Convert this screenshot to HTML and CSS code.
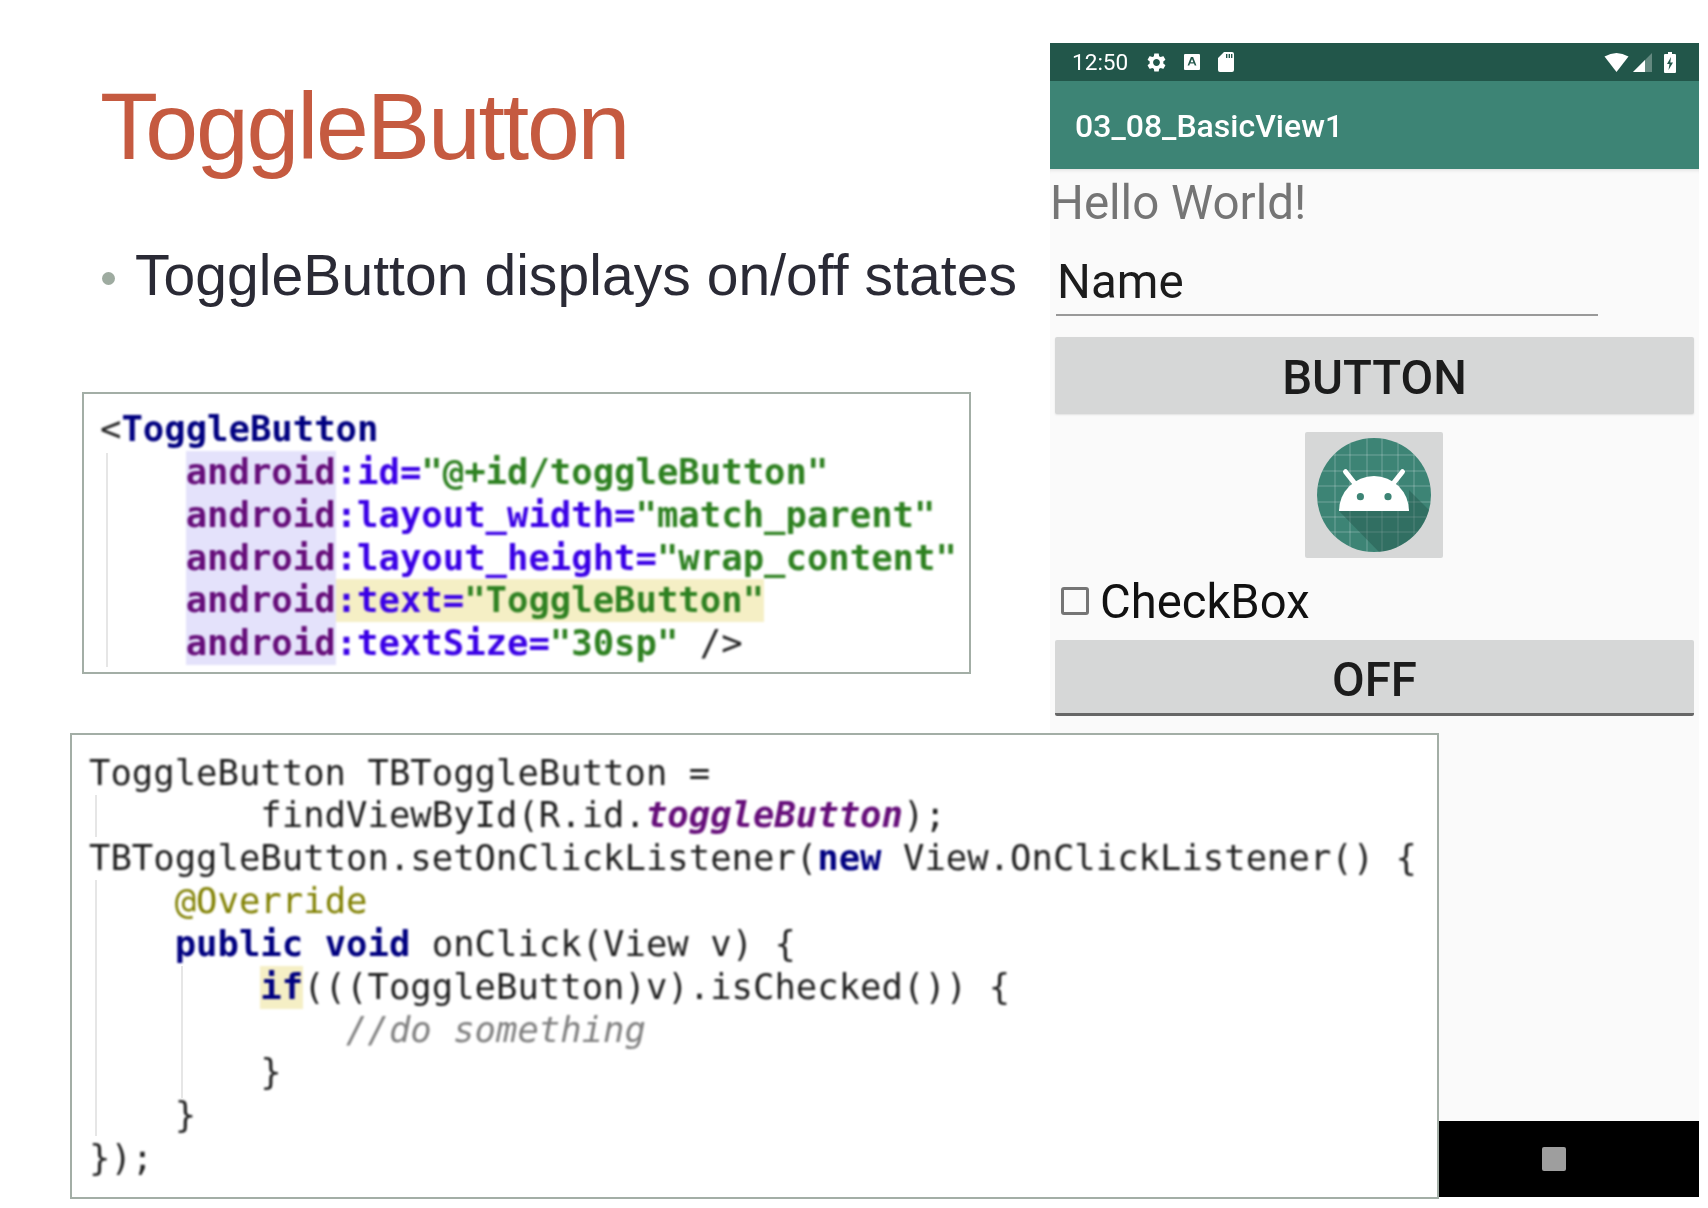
FILE: index.html
```html
<!DOCTYPE html>
<html lang="en">
<head>
<meta charset="utf-8">
<title>ToggleButton</title>
<link rel="stylesheet" href="styles.css">
</head>
<body>
<main class="slide">
  <section class="left">
    <h1 class="title">ToggleButton</h1>
    <div class="bullet"><span class="dot"></span><span class="bullet-text">ToggleButton displays on/off states</span></div>
    <div class="xml-box">
      <span class="guide guide-xml"></span>
<pre class="code bold"><span class="plain">&lt;</span><span class="tag">ToggleButton</span>
    <span class="ns">android</span><span class="attr">:id=</span><span class="val">"@+id/toggleButton"</span>
    <span class="ns">android</span><span class="attr">:layout_width=</span><span class="val">"match_parent"</span>
    <span class="ns">android</span><span class="attr">:layout_height=</span><span class="val">"wrap_content"</span>
    <span class="ns">android</span><span class="hl"><span class="attr">:text=</span><span class="val">"ToggleButton"</span></span>
    <span class="ns">android</span><span class="attr">:textSize=</span><span class="val">"30sp"</span> <span class="plain">/&gt;</span></pre>
    </div>
  </section>

  <section class="phone">
    <div class="statusbar">
      <span class="time">12:50</span>
      <svg class="ic-gear" viewBox="2.5 2 19 20"><path fill="#fff" d="M19.14 12.94c.04-.3.06-.61.06-.94 0-.32-.02-.64-.07-.94l2.03-1.58c.18-.14.23-.41.12-.61l-1.92-3.32c-.12-.22-.37-.29-.59-.22l-2.39.96c-.5-.38-1.03-.7-1.62-.94l-.36-2.54c-.04-.24-.24-.41-.48-.41h-3.84c-.24 0-.43.17-.47.41l-.36 2.54c-.59.24-1.13.57-1.62.94l-2.39-.96c-.22-.08-.47 0-.59.22L2.74 8.87c-.12.21-.08.47.12.61l2.03 1.58c-.05.3-.09.63-.09.94s.02.64.07.94l-2.03 1.58c-.18.14-.23.41-.12.61l1.92 3.32c.12.22.37.29.59.22l2.39-.96c.5.38 1.03.7 1.62.94l.36 2.54c.05.24.24.41.48.41h3.84c.24 0 .44-.17.47-.41l.36-2.54c.59-.24 1.13-.56 1.62-.94l2.39.96c.22.08.47 0 .59-.22l1.92-3.32c.12-.22.07-.47-.12-.61l-2.01-1.58zM12 15.6c-1.98 0-3.6-1.62-3.6-3.6s1.62-3.6 3.6-3.6 3.6 1.62 3.6 3.6-1.62 3.6-3.6 3.6z"/></svg>
      <svg class="ic-a" viewBox="0 0 16 16"><path fill="#fff" fill-rule="evenodd" d="M1 0h14a1 1 0 0 1 1 1v14a1 1 0 0 1-1 1H1a1 1 0 0 1-1-1V1a1 1 0 0 1 1-1zM6.9 3 3.6 11.6h1.7l.7-2h4l.7 2h1.7L9.1 3zM8 4.9l1.4 3.4H6.6z"/></svg>
      <svg class="ic-sd" viewBox="0 0 16 20"><path fill="#fff" fill-rule="evenodd" d="M6 0h8a2 2 0 0 1 2 2v16a2 2 0 0 1-2 2H2a2 2 0 0 1-2-2V6zM8 2v4h1.4V2zM10.6 2v4H12V2zM13 2v4h1.400V2z"/></svg>
      <span class="status-spacer"></span>
      <svg class="ic-wifi" viewBox="0 0 24 19"><path fill="#fff" d="M0 3.500Q12-3.500 24 3.500L12 19z"/></svg>
      <svg class="ic-signal" viewBox="0 0 19 19"><path fill="#fff" fill-opacity=".3" d="M19 0v19H0z"/><path fill="#fff" d="M12 7v12H0z"/></svg>
      <svg class="ic-batt" viewBox="0 0 12 21"><path fill="#fff" fill-rule="evenodd" d="M4 0h4v2h3a1 1 0 0 1 1 1v17a1 1 0 0 1-1 1H1a1 1 0 0 1-1-1V3a1 1 0 0 1 1-1h3zM7 5 3 12h2.500L4.500 18 9 10.500H6.300z"/></svg>
    </div>
    <div class="appbar">03_08_BasicView1</div>
    <div class="content">
      <div class="hello">Hello World!</div>
      <div class="field">Name</div>
      <div class="btn btn-main">BUTTON</div>
      <div class="image-btn">
        <svg class="robot" viewBox="0 0 138 126">
          <defs><clipPath id="disc"><circle cx="69" cy="63" r="57"/></clipPath></defs>
          <circle cx="69" cy="63" r="57" fill="#3d8475"/>
          <g clip-path="url(#disc)">
            <path class="grid" d="M30 0v126M45 0v126M62 0v126M77 0v126M93 0v126M109 0v126M0 23h138M0 39h138M0 54h138M0 70h138M0 85h138M0 100h138"/>
            <path fill="#1f4f45" fill-opacity=".38" d="M34 79 76 122H130V84L104 58V79z"/>
          </g>
          <path class="antenna" d="M40.500 39.700 49.400 51M97.500 39.700 88.600 51"/>
          <path fill="#fff" d="M34 79a35 35 0 0 1 70 0z"/>
          <circle cx="55.400" cy="64.700" r="3.600" fill="#3d8475"/>
          <circle cx="83" cy="64.700" r="3.600" fill="#3d8475"/>
        </svg>
      </div>
      <div class="check-row"><span class="checkbox"></span><span>CheckBox</span></div>
      <div class="btn btn-toggle">OFF</div>
    </div>
    <div class="navbar"><span class="nav-square"></span></div>
  </section>

  <div class="code-box">
    <span class="guide guide-a"></span>
    <span class="guide guide-b"></span>
    <span class="guide guide-c"></span>
<pre class="code">ToggleButton TBToggleButton =
        findViewById(R.id.<span class="field-ref">toggleButton</span>);
TBToggleButton.setOnClickListener(<span class="kw">new</span> View.OnClickListener() {
    <span class="anno">@Override</span>
    <span class="kw">public</span> <span class="kw">void</span> onClick(View v) {
        <span class="kw hl">if</span>(((ToggleButton)v).isChecked()) {
            <span class="comment">//do something</span>
        }
    }
});</pre>
  </div>
</main>
</body>
</html>
```

FILE: styles.css
```css
* { box-sizing: border-box; }

html, body {
  margin: 0;
  background: #fff;
}

.slide {
  position: relative;
  display: flex;
  width: 1708px;
  height: 1208px;
  overflow: hidden;
  background: #fff;
}

/* Left column */
.left {
  width: 1050px;
  flex: none;
  padding-top: 76px;
  font-family: "Liberation Sans", Arial, sans-serif;
}

.title {
  margin: 0 0 67px 100px;
  font-size: 95px;
  font-weight: 400;
  line-height: 100px;
  letter-spacing: -2.200px;
  color: #c55a40;
  filter: blur(.4px);
}

.bullet {
  display: flex;
  align-items: center;
  margin-left: 102px;
  height: 64px;
  filter: blur(.4px);
}

.dot {
  width: 13px;
  height: 13px;
  margin: 6px 20px 0 0;
  border-radius: 50%;
  background: #9eaba0;
}

.bullet-text {
  font-size: 57px;
  line-height: 64px;
  letter-spacing: .060px;
  color: #2a2a35;
  white-space: nowrap;
}

/* Code snippets */
.code {
  margin: 0;
  font-family: "DejaVu Sans Mono", "Liberation Mono", monospace;
  font-size: 35.600px;
  line-height: 42.850px;
  color: #1f1f1f;
  white-space: pre;
  filter: blur(.8px);
}

.bold { font-weight: 700; }

.xml-box {
  position: relative;
  width: 889px;
  height: 282px;
  margin: 85px 0 0 82px;
  padding: 14px 0 0 16px;
  border: 2px solid #a3aea6;
  background: #fff;
}

.code-box {
  position: absolute;
  left: 70px;
  top: 733px;
  width: 1369px;
  height: 466px;
  padding: 16.500px 0 0 17px;
  border: 2px solid #a3aea6;
  background: #fff;
}

.guide {
  position: absolute;
  width: 1.500px;
  background: #e6e6e6;
}

.guide-xml { left: 22px; top: 59px; height: 214px; }
.guide-a { left: 23px; top: 60px; height: 42px; }
.guide-b { left: 23px; top: 145px; height: 256px; }
.guide-c { left: 109px; top: 231px; height: 132px; }

.tag { color: #000080; }
.plain { color: #222; font-weight: 400; }
.ns { display: inline-block; background: #e4e2fb; color: #660e7a; }
.attr { color: #3a00e6; }
.val { color: #2e8121; }
.hl { display: inline-block; background: #f5efc5; }
.kw { color: #000080; font-weight: 700; }
.anno { color: #808000; }
.comment { color: #808080; font-style: italic; }
.field-ref { color: #660e7a; font-weight: 700; font-style: italic; }

/* Phone */
.phone {
  display: flex;
  flex-direction: column;
  width: 649px;
  height: 1154px;
  margin-top: 43px;
  font-family: Roboto, "Liberation Sans", sans-serif;
  background: #fafafa;
  filter: blur(.4px);
}

.statusbar {
  display: flex;
  align-items: center;
  flex: none;
  height: 38px;
  padding: 0 23px 0 22px;
  background: #22564a;
  color: #fff;
}

.time {
  width: 74px;
  font-size: 22.600px;
  white-space: nowrap;
}

.status-spacer { flex: 1; }

.ic-gear { width: 21px; height: 19px; }
.ic-a { width: 16px; height: 16px; margin-left: 17px; }
.ic-sd { width: 16px; height: 20px; margin-left: 18px; }
.ic-wifi { width: 25px; height: 19px; }
.ic-signal { width: 19px; height: 19px; margin-left: 4px; }
.ic-batt { width: 12px; height: 21px; margin-left: 12px; }

.appbar {
  display: flex;
  align-items: center;
  flex: none;
  height: 88px;
  padding: 2px 0 0 25px;
  background: #3d8475;
  color: #fff;
  font-size: 32px;
  font-weight: 500;
}

.content {
  flex: 1;
  padding-top: 6px;
  box-shadow: inset 0 5px 4px -4px rgba(0, 0, 0, .12);
}

.hello {
  font-size: 47.500px;
  line-height: 56px;
  color: #757575;
}

.field {
  width: 542px;
  height: 62px;
  margin: 23px 0 0 6px;
  padding: 1px 0 0 1px;
  border-bottom: 2px solid #999;
  font-size: 47.500px;
  line-height: 54px;
  color: #1c1c1c;
}

.btn {
  display: flex;
  align-items: center;
  justify-content: center;
  width: 639px;
  margin-left: 5px;
  padding-top: 4px;
  border-radius: 2px;
  background: #d6d7d7;
  color: #1c1c1c;
  font-size: 47.400px;
  font-weight: 500;
}

.btn-main {
  height: 77px;
  margin-top: 21px;
  box-shadow: 0 1px 2px rgba(0, 0, 0, .1);
}

.btn-toggle {
  height: 76px;
  margin-top: 10px;
  padding-top: 6px;
  border-bottom: 3px solid #666;
}

.image-btn {
  width: 138px;
  height: 126px;
  margin: 18px 0 0 255px;
  border-radius: 2px;
  background: #d6d7d7;
}

.robot {
  display: block;
  width: 138px;
  height: 126px;
}

.grid {
  fill: none;
  stroke: rgba(255, 255, 255, .28);
  stroke-width: 1;
}

.antenna {
  fill: none;
  stroke: #fff;
  stroke-width: 5;
  stroke-linecap: round;
}

.check-row {
  display: flex;
  align-items: center;
  gap: 11px;
  height: 56px;
  margin: 16px 0 0 11px;
  font-size: 47.200px;
  line-height: 56px;
  color: #111;
}

.checkbox {
  width: 28px;
  height: 28px;
  margin-top: -3px;
  border: 3px solid #757575;
  border-radius: 3px;
}

.navbar {
  display: flex;
  align-items: center;
  justify-content: flex-end;
  flex: none;
  height: 76px;
  padding-right: 133px;
  background: #000;
}

.nav-square {
  width: 24px;
  height: 24px;
  border-radius: 2px;
  background: #9e9e9e;
}
```
